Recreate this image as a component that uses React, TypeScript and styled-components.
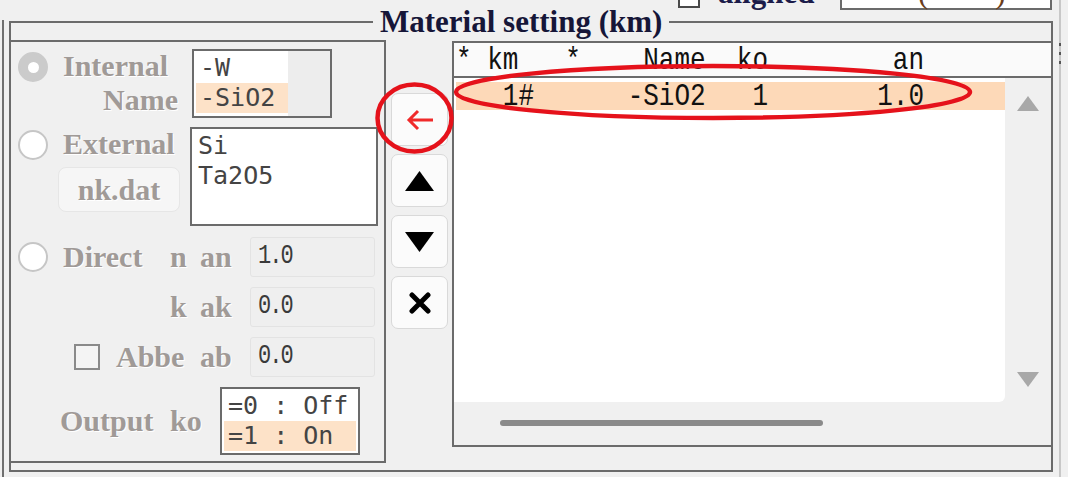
import React from 'react';
import styled, { createGlobalStyle } from 'styled-components';

const SERIF = `"Liberation Serif", "Times New Roman", serif`;
const MONO = `"Liberation Mono", "Courier New", monospace`;
const LIST_FONT = `"DejaVu Sans Mono", "Liberation Mono", monospace`;
const LINE = '#6b6b6b';
const PEACH = '#fde2c8';

const GlobalStyle = createGlobalStyle`
  html, body { margin: 0; padding: 0; background: #f0f0f0; overflow: hidden; }
  #root { width: 1068px; height: 477px; }
`;

const Screen = styled.div`
  position: relative;
  width: 1068px;
  height: 477px;
  overflow: hidden;
  background: #f0f0f0;
  display: flex;
  flex-direction: column;
`;

/* strip above the group box, mostly scrolled out of view */
const TopRow = styled.div`
  height: 10px;
  flex: none;
  display: flex;
  align-items: flex-end;
  padding-left: 678px;
`;

const TopCheck = styled.span`
  flex: none;
  width: 22px;
  height: 22px;
  box-sizing: border-box;
  border: 2px solid #4a4a4a;
  background: #fff;
  margin-bottom: 2px;
`;

const TopLabel = styled.span`
  flex: none;
  width: 122px;
  margin-left: 18px;
  font: bold 31px/34px ${SERIF};
  color: #1c1c4a;
`;

const TopField = styled.div`
  flex: none;
  width: 212px;
  height: 36px;
  box-sizing: border-box;
  border: 2px solid ${LINE};
  background: #fff;
  display: flex;
  align-items: center;
  gap: 67px;
  padding-left: 76px;
  font: 31px/1 ${SERIF};
  color: #6a3e1c;
`;

const MainRow = styled.div`
  flex: 1;
  min-height: 0;
  display: flex;
  margin-top: -5px;
`;

const OuterRule = styled.div`
  flex: none;
  width: 2px;
  margin: 15px 0 0 2px;
  background: #707070;
`;

const Group = styled.fieldset`
  flex: none;
  margin: 0 0 0 5px;
  padding: 0;
  min-width: 0;
  width: 1044px;
  height: 467px;
  box-sizing: border-box;
  border: 2px solid ${LINE};
  display: flex;
  align-items: flex-start;
`;

const Legend = styled.legend`
  margin-left: 362px;
  padding: 0 7px;
  font: bold 31px/34px ${SERIF};
  color: #161638;
`;

const EdgeRule = styled.div`
  flex: none;
  width: 2px;
  margin: -5px 0 0 6px;
  background: #c8c8c8;
  display: flex;
  flex-direction: column;
  padding-top: 43px;
  gap: 6px;
`;

const EdgeDot = styled.span`
  width: 2px;
  height: 3px;
  background: #555;
`;

/* ---------- left panel ---------- */

const LeftPanel = styled.div`
  flex: none;
  width: 375px;
  height: 423px;
  margin-top: 1px;
  box-sizing: border-box;
  border: 2px solid ${LINE};
  border-left: none;
  display: flex;
  flex-direction: column;
`;

const OptionRow = styled.div<{ $top: number; $h: number }>`
  display: flex;
  align-items: flex-start;
  margin-top: ${p => p.$top}px;
  height: ${p => p.$h}px;
`;

const FieldRow = styled.div<{ $top: number; $h?: number }>`
  display: flex;
  align-items: center;
  margin-top: ${p => p.$top}px;
  height: ${p => p.$h ?? 40}px;
`;

const Radio = styled.span<{ $on?: boolean; $top?: number }>`
  flex: none;
  width: 30px;
  height: 30px;
  margin: ${p => p.$top ?? 0}px 0 0 7px;
  border-radius: 50%;
  box-sizing: border-box;
  background: ${p => (p.$on ? '#cbcbcb' : '#fff')};
  border: 2px solid ${p => (p.$on ? '#cbcbcb' : '#c6c6c6')};
  display: flex;
  align-items: center;
  justify-content: center;
  &::after {
    content: '';
    display: ${p => (p.$on ? 'block' : 'none')};
    width: 11px;
    height: 11px;
    border-radius: 50%;
    background: #fff;
  }
`;

const CheckBox = styled.span`
  flex: none;
  width: 26px;
  height: 26px;
  box-sizing: border-box;
  border: 2px solid #8a8a8a;
  background: #f4f4f4;
  margin-left: 11px;
`;

const LabelStack = styled.div<{ $w: number }>`
  flex: none;
  width: ${p => p.$w}px;
  margin-left: 15px;
  display: flex;
  flex-direction: column;
  align-items: flex-start;
`;

const Caption = styled.span<{ $indent?: number }>`
  font: bold 30px/34px ${SERIF};
  color: #a09a97;
  text-shadow: 1px 1px 0 #fff;
  white-space: nowrap;
  padding-left: ${p => p.$indent ?? 0}px;
`;

const Cell = styled.div<{ $w: number; $shift?: number }>`
  flex: none;
  width: ${p => p.$w}px;
  margin-left: ${p => p.$shift ?? 0}px;
  display: flex;
  align-items: center;
  gap: 16px;
`;

const FileButton = styled.div`
  width: 122px;
  height: 45px;
  margin: 6px 0 0 -5px;
  box-sizing: border-box;
  border: 1px solid #e6e6e6;
  border-radius: 8px;
  background: #f6f6f6;
  display: flex;
  align-items: center;
  justify-content: center;
`;

const ListBox = styled.div<{ $w: number; $h: number; $fill?: number }>`
  flex: none;
  width: ${p => p.$w}px;
  height: ${p => p.$h}px;
  box-sizing: border-box;
  border: 2px solid ${LINE};
  padding: 2px;
  background: ${p =>
    p.$fill ? `linear-gradient(to right, #fff 0 ${p.$fill + 2}px, #ededed ${p.$fill + 2}px)` : '#fff'};
`;

const ListItem = styled.div<{ $sel?: boolean; $w?: number }>`
  width: ${p => (p.$w ? `${p.$w}px` : 'auto')};
  height: 30px;
  padding-left: 4px;
  box-sizing: border-box;
  font: 25px/30px ${LIST_FONT};
  color: #444;
  white-space: pre;
  background: ${p => (p.$sel ? PEACH : 'transparent')};
`;

const ValueBox = styled.div`
  flex: none;
  width: 125px;
  height: 40px;
  box-sizing: border-box;
  border: 1px solid #e3e3e3;
  border-radius: 3px;
  background: #efefef;
  padding-left: 7px;
  display: flex;
  align-items: center;
`;

const ValueText = styled.span`
  display: inline-block;
  font: 22px/1 ${MONO};
  color: #3a3a3a;
  transform: scaleY(1.25);
  letter-spacing: -2px;
`;

/* ---------- middle buttons ---------- */

const ButtonColumn = styled.div`
  flex: none;
  width: 66px;
  box-sizing: border-box;
  padding: 54px 0 0 5px;
  display: flex;
  flex-direction: column;
  gap: 8px;
`;

const ToolButton = styled.div`
  width: 57px;
  height: 53px;
  box-sizing: border-box;
  border: 1px solid #d9d9d9;
  border-radius: 7px;
  background: #fbfbfb;
  display: flex;
  align-items: center;
  justify-content: center;
`;

/* ---------- right list ---------- */

const DataList = styled.div`
  flex: 1;
  height: 406px;
  margin-top: 2px;
  box-sizing: border-box;
  border: 2px solid ${LINE};
  border-right: none;
  display: flex;
  flex-direction: column;
`;

const DataHeader = styled.div`
  flex: none;
  height: 33px;
  border-bottom: 2px solid ${LINE};
  background: #fafafa;
  padding-left: 2px;
  overflow: hidden;
`;

const TallText = styled.span<{ $lh: number }>`
  display: inline-block;
  font: 26px/${p => p.$lh}px ${MONO};
  color: #111;
  white-space: pre;
  transform: scaleY(1.18);
  transform-origin: 50% 60%;
`;

const DataBody = styled.div`
  flex: 1;
  display: grid;
  grid-template-columns: 551px 1fr;
  grid-template-rows: 324px 1fr;
  background: #f0f0f0;
`;

const DataRows = styled.div`
  background: #fff;
  border-bottom-right-radius: 6px;
  padding-top: 4px;
`;

const DataRow = styled.div<{ $sel?: boolean }>`
  height: 28px;
  margin-left: 2px;
  background: ${p => (p.$sel ? '#fdd9b8' : 'transparent')};
`;

const VScroll = styled.div`
  display: flex;
  flex-direction: column;
  align-items: center;
  justify-content: space-between;
  padding: 18px 0 15px;
`;

const HScroll = styled.div`
  grid-column: 1 / span 2;
  padding: 18px 0 0 46px;
`;

const HThumb = styled.div`
  width: 323px;
  height: 6px;
  border-radius: 3px;
  background: #8a8a8a;
`;

const Annotations = styled.svg`
  position: absolute;
  left: 0;
  top: 0;
  pointer-events: none;
`;

const Tri = ({ up, color, w, h }: { up: boolean; color: string; w: number; h: number }) => (
  <svg width={w} height={h} viewBox={`0 0 ${w} ${h}`}>
    <polygon points={up ? `${w / 2},0 ${w},${h} 0,${h}` : `0,0 ${w},0 ${w / 2},${h}`} fill={color} />
  </svg>
);

const header = '* km   *    Name  ko        an';
const row = '   1#      -SiO2   1       1.0';

export default function App() {
  return (
    <Screen>
      <GlobalStyle />
      <TopRow>
        <TopCheck />
        <TopLabel>aligned</TopLabel>
        <TopField>
          <span>(</span>
          <span>)</span>
        </TopField>
      </TopRow>
      <MainRow>
        <OuterRule />
        <Group>
          <Legend>Material setting (km)</Legend>

          <LeftPanel>
            <OptionRow $top={7} $h={69}>
              <Radio $on $top={3} />
              <LabelStack $w={129}>
                <Caption>Internal</Caption>
                <Caption $indent={40}>Name</Caption>
              </LabelStack>
              <ListBox $w={140} $h={69} $fill={92}>
                <ListItem $w={92}>-W</ListItem>
                <ListItem $w={92} $sel>-SiO2</ListItem>
              </ListBox>
            </OptionRow>

            <OptionRow $top={9} $h={99}>
              <Radio $top={3} />
              <LabelStack $w={127}>
                <Caption>External</Caption>
                <FileButton>
                  <Caption>nk.dat</Caption>
                </FileButton>
              </LabelStack>
              <ListBox $w={188} $h={99}>
                <ListItem>Si</ListItem>
                <ListItem>Ta2O5</ListItem>
              </ListBox>
            </OptionRow>

            <FieldRow $top={11}>
              <Cell $w={52}>
                <Radio />
              </Cell>
              <Cell $w={107}>
                <Caption>Direct</Caption>
              </Cell>
              <Cell $w={30}>
                <Caption>n</Caption>
              </Cell>
              <Cell $w={50}>
                <Caption>an</Caption>
              </Cell>
              <ValueBox>
                <ValueText>1.0</ValueText>
              </ValueBox>
            </FieldRow>

            <FieldRow $top={10}>
              <Cell $w={52} />
              <Cell $w={107} />
              <Cell $w={30}>
                <Caption>k</Caption>
              </Cell>
              <Cell $w={50}>
                <Caption>ak</Caption>
              </Cell>
              <ValueBox>
                <ValueText>0.0</ValueText>
              </ValueBox>
            </FieldRow>

            <FieldRow $top={10}>
              <Cell $w={52} />
              <Cell $w={137}>
                <CheckBox />
                <Caption>Abbe</Caption>
              </Cell>
              <Cell $w={50}>
                <Caption>ab</Caption>
              </Cell>
              <ValueBox>
                <ValueText>0.0</ValueText>
              </ValueBox>
            </FieldRow>

            <FieldRow $top={10} $h={68}>
              <Cell $w={52} />
              <Cell $w={110} $shift={-3}>
                <Caption>Output</Caption>
              </Cell>
              <Cell $w={50}>
                <Caption>ko</Caption>
              </Cell>
              <ListBox $w={140} $h={68}>
                <ListItem>=0 : Off</ListItem>
                <ListItem $sel>=1 : On</ListItem>
              </ListBox>
            </FieldRow>
          </LeftPanel>

          <ButtonColumn>
            <ToolButton>
              <svg width="30" height="22" viewBox="0 0 30 22">
                <path d="M28 11 H4 M13 2 L4 11 L13 20" fill="none" stroke="#f02a2a" strokeWidth="3" />
              </svg>
            </ToolButton>
            <ToolButton>
              <Tri up color="#000" w={29} h={20} />
            </ToolButton>
            <ToolButton>
              <Tri up={false} color="#000" w={29} h={20} />
            </ToolButton>
            <ToolButton>
              <svg width="22" height="22" viewBox="0 0 22 22">
                <path d="M3 3 L19 19 M19 3 L3 19" stroke="#000" strokeWidth="5" strokeLinecap="round" />
              </svg>
            </ToolButton>
          </ButtonColumn>

          <DataList>
            <DataHeader>
              <TallText $lh={36}>{header}</TallText>
            </DataHeader>
            <DataBody>
              <DataRows>
                <DataRow $sel>
                  <TallText $lh={30}>{row}</TallText>
                </DataRow>
              </DataRows>
              <VScroll>
                <Tri up color="#a8a8a8" w={22} h={15} />
                <Tri up={false} color="#a8a8a8" w={22} h={15} />
              </VScroll>
              <HScroll>
                <HThumb />
              </HScroll>
            </DataBody>
          </DataList>
        </Group>
        <EdgeRule>
          <EdgeDot />
          <EdgeDot />
          <EdgeDot />
        </EdgeRule>
      </MainRow>

      <Annotations width="1068" height="477" viewBox="0 0 1068 477">
        <ellipse cx="713" cy="92" rx="257" ry="26" fill="none" stroke="#e5121b" strokeWidth="4.5" />
        <ellipse cx="414.5" cy="118" rx="37" ry="33.5" fill="none" stroke="#e5121b" strokeWidth="4.5" />
      </Annotations>
    </Screen>
  );
}
